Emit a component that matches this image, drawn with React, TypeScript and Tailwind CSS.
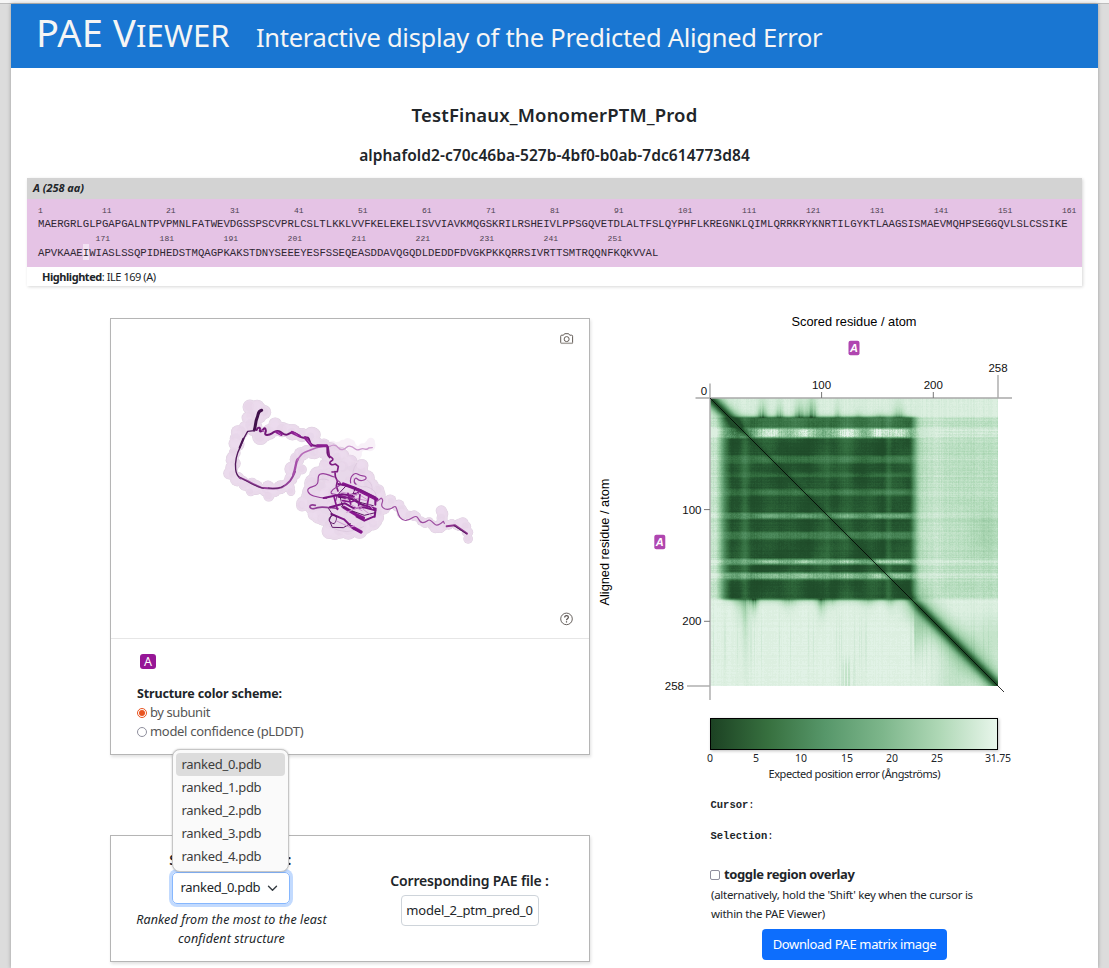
import React from "react";

const ROW_ONE =
  "MAERGRLGLPGAPGALNTPVPMNLFATWEVDGSSPSCVPRLCSLTLKKLVVFKELEKELISVVIAVKMQGSKRILRSHEIVLPPSGQVETDLALTFSLQYPHFLKREGNKLQIMLQRRKRYKNRTILGYKTLAAGSISMAEVMQHPSEGGQVLSLCSSIKE";
const ROW_TWO =
  "APVKAAEIWIASLSSQPIDHEDSTMQAGPKAKSTDNYSEEEYESFSSEQEASDDAVQGQDLDEDDFDVGKPKKQRRSIVRTTSMTRQQNFKQKVVAL";
const HIGHLIGHT = 7;

function makeRandom(seed: number) {
  let s = seed;
  return () => {
    s = (s * 1664525 + 1013904223) % 4294967296;
    return s / 4294967296;
  };
}

const SIZE = 288;
const LEVELS = 48;
const RAMP: [number, number, number, number][] = [
  [0, 28, 66, 36],
  [0.1, 33, 80, 44],
  [0.2, 50, 108, 62],
  [0.4, 86, 148, 102],
  [0.6, 126, 183, 139],
  [0.8, 176, 217, 184],
  [1, 231, 245, 235],
];

function ramp(v: number) {
  for (let i = 1; i < RAMP.length; i++) {
    const a = RAMP[i - 1];
    const b = RAMP[i];
    if (v <= b[0]) {
      const t = (v - a[0]) / (b[0] - a[0]);
      const c = [1, 2, 3].map((k) => Math.round(a[k] + (b[k] - a[k]) * t));
      return `rgb(${c[0]},${c[1]},${c[2]})`;
    }
  }
  return "rgb(231,245,235)";
}

function smooth(a: number, b: number, x: number) {
  const t = Math.min(1, Math.max(0, (x - a) / (b - a)));
  return t * t * (3 - 2 * t);
}

const bump = (x: number, c: number, w: number) => Math.exp(-(((x - c) / w) ** 2));

function buildMatrix() {
  const random = makeRandom(11);
  const rows = Array.from({ length: SIZE }, () => random() - 0.5);
  const cols = Array.from({ length: SIZE }, () => random() - 0.5);
  // [start, end, strength, patchiness]
  const bands = [
    [18, 31, 0.13, 0.2],
    [29.5, 40.5, 0.8, 0.62],
    [57, 66, 0.16, 0.45],
    [74, 80, 0.1, 0.4],
    [90.5, 98, 0.17, 0.45],
    [114.5, 121.5, 0.42, 0.55],
    [133, 142, 0.21, 0.35],
    [160.5, 167, 0.62, 0.55],
    [174, 182, 0.55, 0.35],
  ];
  const paths: string[] = Array.from({ length: LEVELS + 1 }, () => "");
  for (let y = 0; y < SIZE; y++) {
    let start = 0;
    let last = -1;
    let band = 0;
    let patchy = 0;
    for (const [a, b, s, p] of bands) {
      const m = smooth(a - 1, a + 3, y + 0.5) * (1 - smooth(b - 3, b + 1, y + 0.5));
      band += m * s;
      patchy = Math.max(patchy, m * p);
    }
    for (let x = 0; x <= SIZE; x++) {
      let level = -1;
      if (x < SIZE) {
        const n = random() - 0.5;
        const patches =
          bump(x, 60, 15) + bump(x, 95, 13) + bump(x, 137, 17) + bump(x, 168, 8) + bump(x, 188, 13);
        const patch = 1 - patchy + patchy * Math.min(1.1, patches);
        const wave =
          0.03 * Math.sin(x / 9 + Math.sin(y / 23) * 2) * Math.sin(y / 14 - x / 31) +
          0.025 * Math.sin((x + y) / 13) +
          0.02 * Math.sin(x / 4.1);
        let inner =
          0.115 +
          wave * 0.8 +
          band * patch * (1 + cols[x] * 0.2) +
          0.085 * bump(x, 35, 4) +
          0.1 * bump(x, 178, 3) +
          0.045 * bump(x, 117, 4) +
          0.04 * bump(x, 135, 9) +
          rows[y] * 0.035 +
          cols[x] * 0.02 +
          n * (0.02 + band * 0.13);
        inner = Math.max(0.07, inner);
        const side =
          x < 100
            ? 0.88 - 0.2 * smooth(2, 16, x) + band * 0.16
            : 0.83 + 0.05 * smooth(240, 205, x) + band * 0.1 - 0.08 * bump(x, 275, 14) * bump(y, 135, 26);
        const sideValue = Math.min(
          0.96,
          side + rows[y] * 0.06 + cols[x] * 0.045 + n * 0.045 + (x > 210 ? 0.04 * bump(x, 222, 12) : 0)
        );
        const inX = smooth(5, 22, x) * (1 - 0.86 * smooth(198, 210, x) - 0.14 * smooth(205, 232, x));
        const middle = inner * inX + sideValue * (1 - inX);
        let top = 0.945 + cols[x] * 0.03 + rows[y] * 0.015 + n * 0.015;
        const up = Math.max(0, 19 - y);
        for (const [c, w, l, s] of [
          [52, 5, 9, 0.5],
          [69, 4, 8, 0.4],
          [89, 5, 9, 0.5],
          [101, 5, 12, 0.62],
          [127, 3, 8, 0.28],
          [148, 4, 4, 0.2],
          [188, 6, 8, 0.32],
          [170, 6, 3, 0.2],
        ]) {
          top -= s * bump(x, c, w) * Math.exp(-up / l) * (1 + cols[x] * 0.6);
        }
        if (x > 16) top -= 0.4 * Math.exp(-up / 1.8) * (1 - smooth(192, 212, x));
        let bottom = 0.965 + cols[x] * 0.022 + rows[y] * 0.018 + n * 0.012;
        const down = Math.max(0, y - 201);
        for (const [c, w, l, s] of [
          [35, 3.5, 34, 0.24],
          [43, 4.5, 7, 0.6],
          [29, 5, 10, 0.25],
          [111, 5, 8, 0.45],
          [122, 5, 5, 0.2],
          [78, 8, 6, 0.22],
          [157, 8, 5, 0.22],
          [180, 5, 6, 0.22],
        ]) {
          bottom -= s * bump(x, c, w) * Math.exp(-down / l) * (1 + cols[x] * 0.5);
        }
        bottom -= 0.35 * Math.exp(-down / 1.8) * smooth(8, 22, x) * (1 - smooth(198, 210, x));
        if (cols[x] < -0.1) bottom -= 0.1 * bump(x, 137, 6) * smooth(250, 275, y);
        if (cols[x] < -0.38) bottom -= 0.035 * bump(y, 245, 24);
        if (x > 203) {
          bottom -= 0.15 * bump(x, 207, 9) * bump(y, 232, 22);
          bottom -= 0.1 * bump(x, 244, 17) * smooth(225, 278, y);
          bottom -= 0.1 * smooth(225, 288, x) * bump(y, 240, 25);
        }
        const tMid = smooth(17.2, 20.5, y);
        const bMid = smooth(199, 202.5, y);
        let v = top * (1 - tMid) + middle * tMid;
        v = v * (1 - bMid) + bottom * bMid;
        const d = Math.abs(x - y);
        const t = (x + y) / 2;
        const tail = smooth(188, 212, t);
        const head = 1 - smooth(24, 44, t);
        const width = 4 + head * 2.5 + tail * 3.2;
        v *= 1 - (0.35 + 0.54 * Math.max(head, tail)) * Math.exp(-((d / width) ** 2));
        v *= 1 - 0.3 * tail * Math.exp(-((d / 19) ** 2)) - 0.4 * head * Math.exp(-((d / 12) ** 2));
        level = Math.round(Math.min(1, Math.max(0.07, v)) * LEVELS);
      }
      if (level !== last) {
        if (last >= 0) paths[last] += `M${start} ${y}h${x - start}v1h${start - x}z`;
        start = x;
        last = level;
      }
    }
  }
  return paths;
}

const MATRIX = buildMatrix();

function Matrix() {
  return (
    <g transform="translate(110 90)" shapeRendering="crispEdges">
      {MATRIX.map((d, i) => (d ? <path key={i} d={d} fill={ramp(i / LEVELS)} /> : null))}
    </g>
  );
}

function ChainTag({ x, y }: { x: number; y: number }) {
  return (
    <g>
      <rect x={x} y={y} width="11" height="14.5" rx="2" fill="#b046b0" />
      <text x={x + 5.5} y={y + 11.3} textAnchor="middle" fontSize="11" fontWeight="700" fontStyle="italic" fill="#fff">
        A
      </text>
    </g>
  );
}

function PaePlot() {
  return (
    <svg width="430" height="400" viewBox="-10 0 430 400" className="block font-['Liberation_Sans',sans-serif]">
      <text x="254" y="18" textAnchor="middle" fontSize="12.8" textLength="125">
        Scored residue / atom
      </text>
      <text transform="translate(9.2 234) rotate(-90)" textAnchor="middle" fontSize="12.8" textLength="127">
        Aligned residue / atom
      </text>
      <ChainTag x={248.5} y={32.7} />
      <ChainTag x={54.3} y={226.7} />
      <Matrix />
      <g stroke="#a9a9a9" strokeWidth="1.4">
        <path d="M95.5 90H412" />
        <path d="M110 75.500V392" />
        <path d="M398 67V90" />
        <path d="M87 378H110" />
      </g>
      <g stroke="#777" strokeWidth="1">
        <path d="M221.600 84V90M333.300 84V90M104 201.600H110M104 313.300H110" />
      </g>
      <path d="M110 90L404 384" stroke="#000" strokeWidth="0.8" />
      <g fontSize="11.5" fill="#111">
        <text x="104" y="87" textAnchor="middle">0</text>
        <text x="221.5" y="81" textAnchor="middle">100</text>
        <text x="333.300" y="81" textAnchor="middle">200</text>
        <text x="398" y="64" textAnchor="middle">258</text>
        <text x="101.500" y="206" textAnchor="end">100</text>
        <text x="101.500" y="317.200" textAnchor="end">200</text>
        <text x="84" y="382" textAnchor="end">258</text>
      </g>
    </svg>
  );
}

type Point = [number, number];

function blobs(points: Point[], seed: number, spread: number, radius: number) {
  const random = makeRandom(seed);
  const out: [number, number, number][] = [];
  for (let i = 1; i < points.length; i++) {
    const [ax, ay] = points[i - 1];
    const [bx, by] = points[i];
    const steps = Math.max(1, Math.round(Math.hypot(bx - ax, by - ay) / 12));
    for (let k = 0; k < steps; k++) {
      const t = k / steps;
      out.push([
        ax + (bx - ax) * t + (random() - 0.5) * spread,
        ay + (by - ay) * t + (random() - 0.5) * spread,
        radius * (0.75 + random() * 0.4),
      ]);
    }
  }
  return out;
}

const SURFACE = [
  ...blobs([[154, 80], [180, 86], [188, 102], [148, 115], [158, 135], [122, 158], [108, 200], [100, 240], [94, 275], [110, 300], [150, 318], [200, 328], [250, 320], [280, 285], [285, 235], [325, 215], [380, 205]], 3, 16, 19),
  ...blobs([[160, 145], [200, 168], [235, 138], [270, 155], [325, 160], [355, 190], [400, 222], [440, 240]], 9, 22, 21),
  ...blobs([[150, 325], [155, 347]], 21, 4, 14),
  ...blobs([[205, 320], [205, 347], [220, 348]], 22, 4, 15),
  ...blobs([[262, 310], [280, 346]], 23, 4, 14),
  ...blobs([[285, 260], [315, 272]], 24, 4, 13),
  ...blobs([[390, 240], [340, 300], [325, 340], [308, 375], [350, 400], [385, 430], [400, 462], [450, 455], [490, 450], [530, 425], [548, 375], [530, 335], [500, 300], [490, 260], [440, 250], [380, 300], [400, 350], [440, 420], [480, 380], [440, 320], [500, 340], [460, 300], [380, 380], [360, 330], [510, 400], [420, 380]], 5, 16, 21),
  ...blobs([[555, 365], [597, 375], [610, 405], [650, 415], [710, 438], [745, 435], [790, 430], [800, 460], [798, 488]], 7, 12, 16),
  ...blobs([[725, 392], [728, 415], [715, 450]], 4, 4, 16),
];

const FAINT = blobs([[400, 200], [455, 188], [462, 225], [510, 190], [518, 208]], 8, 10, 15);

function Molecule() {
  return (
    <svg width="478" height="319" viewBox="0 0 478 319" className="block">
      <g transform="translate(89 61) scale(0.33333)" fill="none" strokeLinecap="round" strokeLinejoin="round">
        <g opacity="0.4" fill="#eedcf0">
          {FAINT.map(([x, y, r], i) => (
            <circle key={i} cx={x} cy={y} r={r} />
          ))}
        </g>
        <g opacity="0.76">
          {SURFACE.map(([x, y, r], i) => (
            <circle key={i} cx={x} cy={y} r={r + 1.2} fill="#d3bfd5" />
          ))}
          {SURFACE.map(([x, y, r], i) => (
            <circle key={i} cx={x} cy={y} r={r} fill="#e4cfe6" />
          ))}
          <path d="M395 250L350 300L330 370L400 440L480 440L535 400L530 350L490 290L430 240Z" fill="#e2cce4" stroke="#e2cce4" strokeWidth="20" />
          {SURFACE.map(([x, y, r], i) => (
            <circle key={i} cx={x - 2} cy={y - 2} r={r * 0.7} fill={i % 3 ? "#e8d3ea" : "#dbc4de"} opacity="0.4" />
          ))}
          <path d="M470 250Q452 275 462 300T500 320Q535 330 528 360M345 310Q360 290 385 300M390 440Q440 470 490 440M500 300Q520 310 516 330" stroke="#cdb3d0" strokeWidth="3" opacity="0.7" />
        </g>
        <path d="M388 200C400 192 410 196 416 204S432 210 440 202S458 200 466 207S480 206 488 206S500 212 506 204L517 203" stroke="#cb98cd" strokeWidth="4" />
        <path d="M185 91C172 94 176 104 171 114S167 140 163 150" stroke="#40104a" strokeWidth="9" />
        <path d="M163 152L143 154C134 168 127 184 121 200C108 226 105 250 107 268C108 282 113 289 122 296" stroke="#541a5e" strokeWidth="4" />
        <path d="M130 176C126 186 123 193 119 203" stroke="#4a1454" strokeWidth="6" />
        <path d="M119 293C145 302 165 317 184 323C208 326 231 327 245 322C268 310 276 298 285 275" stroke="#94419a" strokeWidth="6" />
        <path d="M119 291C140 304 165 319 190 325M205 324C225 328 240 325 250 318" stroke="#55205e" strokeWidth="2.500" />
        <path d="M280 283C290 258 286 244 294 237" stroke="#a54fa9" strokeWidth="7" />
        <path d="M292 240C304 223 306 220 316 216S345 202 374 198" stroke="#b66bb8" strokeWidth="5" />
        <path d="M170 150C174 137 183 145 180 150S185 157 190 148S200 150 196 159S208 165 216 160S226 151 237 154S252 168 263 163S275 154 286 160S301 175 312 173S326 171 329 184S340 199 352 197L381 198C385 208 377 222 389 232" stroke="#701676" strokeWidth="6" />
        <path d="M230 156L244 163M276 157L298 168M315 173L334 196M352 197H380" stroke="#8c1f92" strokeWidth="9" />
        <path d="M182 148L193 156M234 157L242 164M284 160L292 166M322 180L332 193" stroke="#ab4eb1" strokeWidth="3" />
        <path d="M384 200L388 228C401 236 402 239 393 244S394 258 406 252L415 259L412 275L396 276M405 275L406 290L412 303L409 319L414 333" stroke="#7e1d82" strokeWidth="5" />
        <path d="M403 291C386 287 374 275 360 283S366 313 338 320S328 344 341 348S365 354 380 355M452 309C448 290 463 275 474 283S494 284 498 292S480 306 472 297S458 307 468 313M410 300C430 310 421 316 407 323S388 342 400 342S412 350 407 362" stroke="#963d9b" strokeWidth="3.500" />
        <path d="M346 376C324 370 326 388 341 386C365 376 378 384 392 383S408 387 414 386" stroke="#8f3d95" strokeWidth="5" />
        <path d="M371 354L426 343L450 346L474 339M390 382L435 370L462 385L492 382L526 391" stroke="#781580" strokeWidth="6" />
        <path d="M430 312L462 324L503 344L530 358M432 382L468 404L490 414M455 440L483 456" stroke="#8a1791" strokeWidth="10" />
        <path d="M415 312L445 318L481 330L526 352L526 374M415 350L455 356L480 372L527 386L524 410M394 402L432 418L460 446L483 456M470 410L493 422L521 410" stroke="#7c1684" strokeWidth="6" />
        <path d="M417 350L453 358L487 369L520 377M424 380L465 396L493 406L526 398M386 386L396 401L388 421L397 442L430 443L451 431M402 431C385 430 382 412 397 407S413 421 403 430M436 320L417 340L428 378M466 324L456 350L488 375" stroke="#5e1767" strokeWidth="3" />
        <path d="M420 366L450 351L500 362M440 397L480 380L514 407M460 333L500 358M410 423L450 442L463 438M424 336L470 346M450 372L486 392M500 366L518 386" stroke="#cf96d1" strokeWidth="3" />
        <path d="M416 346L440 352L462 350M428 362L452 366L470 360M402 350L412 388M444 340L452 372M480 344L476 376M506 352L500 384" stroke="#84198b" strokeWidth="5" />
        <path d="M529 365C544 357 542 350 547 358S539 373 548 382S570 389 581 381S589 398 600 412S623 423 640 412S654 430 669 428S684 413 696 425S709 438 721 431S728 420 733 430" stroke="#9b4a9f" strokeWidth="3.500" />
        <path d="M740 439L765 436L801 461" stroke="#8f338f" strokeWidth="6" />
        <path d="M762 437L799 461" stroke="#521b5c" strokeWidth="3" />
      </g>
      <g transform="translate(449 14)" fill="none" stroke="#625b56" strokeWidth="1">
        <path d="M.7 3.200Q.7 2.200 1.700 2.200H3.500L4.600.7H8.600L9.700 2.200H11.600Q12.600 2.200 12.600 3.200V9.500Q12.600 10.500 11.600 10.500H1.700Q.7 10.500 .7 9.500Z" />
        <circle cx="6.650" cy="6.100" r="2.500" />
        <path d="M1 10.300H12.500" stroke="#a8a4a0" strokeWidth="1.500" />
      </g>
      <g transform="translate(455.500 299.900)" fill="none" stroke="#57504d" strokeWidth="0.9">
        <circle r="5.800" />
        <path d="M-1.800-1.500C-1.800-4 1.900-3.800 1.900-1.600C1.900-.2 0-.2 0 1.400M0 2.400V3.600" strokeWidth="1.200" />
      </g>
    </svg>
  );
}

function IndexRow({ first, count }: { first: number; count: number }) {
  return (
    <div className="flex h-[10px] text-[8px] leading-[10px] text-[#4c4150]">
      {Array.from({ length: count }, (_, i) => (
        <span key={i} className="w-16 shrink-0">
          {first + i * 10}
        </span>
      ))}
    </div>
  );
}

function SequencePanel() {
  return (
    <section className="mx-4 mt-[12px] h-[108px] shadow-[1px_1px_3px_rgba(0,0,0,0.16)]">
      <div className="h-[21px] bg-[#d3d3d3] pl-[6px] text-[11px] font-bold italic leading-[20px] tracking-[-0.03px]">A (258 aa)</div>
      <div className="h-[68px] overflow-hidden bg-[#e5c3e5] pl-[11px] pt-[7px] font-['Liberation_Mono',monospace]">
        <IndexRow first={1} count={17} />
        <div className="h-[18px] text-[10.664px] leading-[16px] text-[#2f2733]">{ROW_ONE}</div>
        <div className="pl-[57.600px]">
          <IndexRow first={171} count={9} />
        </div>
        <div className="h-4 text-[10.664px] leading-[18px] text-[#2f2733]">
          {ROW_TWO.slice(0, HIGHLIGHT)}
          <span className="inline-block h-4 bg-[#f3e3f3] align-top leading-[18px]">{ROW_TWO[HIGHLIGHT]}</span>
          {ROW_TWO.slice(HIGHLIGHT + 1)}
        </div>
      </div>
      <div className="pl-[15px] text-[11px] leading-[19px] tracking-[-0.45px]">
        <b>Highlighted</b>: ILE 169 (A)
      </div>
    </section>
  );
}

function StructureCard() {
  return (
    <section className="h-[437px] w-[480px] border border-[#b5b5b5] shadow-[1px_2px_3px_rgba(0,0,0,0.12)]">
      <div className="h-[320px] border-b border-[#e6e6e6]">
        <Molecule />
      </div>
      <div className="pl-[26px] pt-[15px]">
        <div className="ml-[3px] h-[15px] w-4 rounded-[3px] bg-[#961696] text-center text-[12.5px] leading-[15px] text-white">A</div>
        <div className="mt-[15px] text-[12.5px] font-bold leading-[19px] tracking-[-0.14px]">Structure color scheme:</div>
        <div className="flex h-[19px] items-center gap-[3px] text-[13px] tracking-[-0.42px] text-[#555]">
          <span className="flex size-[10px] items-center justify-center rounded-full border border-[#e95420]">
            <span className="size-[6px] rounded-full bg-[#e95420]" />
          </span>
          by subunit
        </div>
        <div className="flex h-[19px] items-center gap-[3px] text-[13px] tracking-[-0.31px] text-[#555]">
          <span className="size-[10px] rounded-full border border-[#8f8f9d]" />
          model confidence (pLDDT)
        </div>
      </div>
    </section>
  );
}

const MODELS = ["ranked_0.pdb", "ranked_1.pdb", "ranked_2.pdb", "ranked_3.pdb", "ranked_4.pdb"];

function FileCard() {
  return (
    <section className="mt-20 grid h-[127px] w-[480px] grid-cols-2 border border-[#b5b5b5] shadow-[1px_2px_3px_rgba(0,0,0,0.12)]">
      <div className="flex flex-col items-center pt-[12px]">
        <div className="h-6 text-[14px] font-semibold leading-6 tracking-[0.4px]">Select structure :</div>
        <div className="relative flex h-[32px] w-[118px] items-center justify-between rounded-[5px] border border-[#86b7fe] pl-2 pr-[11px] text-[13px] tracking-[-0.3px] shadow-[0_0_0_3px_#c2dafe]">
          ranked_0.pdb
          <svg width="11" height="7" viewBox="0 0 11 7" fill="none" stroke="#343a40" strokeWidth="1.400" strokeLinecap="round" strokeLinejoin="round">
            <path d="M1.500 1.200L5.500 5.200L9.500 1.200" />
          </svg>
          <div className="absolute -left-px bottom-[31px] h-[123px] w-[117px] rounded-lg border border-[#c6c6c6] bg-[#fafafa] px-[3px] pt-[3px] text-[#3d3d3d] shadow-[0_0_2px_rgba(0,0,0,0.25)]">
            {MODELS.map((name, i) => (
              <div key={name} className={i === 0 ? "h-[23px] rounded-[4px] bg-[#dcdcdc] pl-[6px] leading-[23px]" : "h-[23px] pl-[6px] leading-[23px]"}>
                {name}
              </div>
            ))}
          </div>
        </div>
        <p className="ml-0.5 mt-[6px] w-[210px] text-center text-[12.500px] italic leading-[19px] tracking-[0.1px]">
          Ranked from the most to the least
          <br />
          confident structure
        </p>
      </div>
      <div className="flex flex-col items-center pt-[35px]">
        <div className="h-6 text-[14px] font-semibold leading-5 tracking-[-0.17px]">Corresponding PAE file :</div>
        <div className="h-[31px] w-[138px] rounded-[4px] border border-[#ced4da] text-center text-[13px] leading-[29px] tracking-[-0.2px]">
          model_2_ptm_pred_0
        </div>
      </div>
    </section>
  );
}

const TICKS: [string, number][] = [["0", 20], ["5", 66], ["10", 111], ["15", 157], ["20", 202], ["25", 247], ["31.75", 308]];

function PaeColumn() {
  return (
    <section className="-mt-[10px] w-[430px]">
      <PaePlot />
      <div className="ml-[120px] mt-[10px] w-[288px]">
        <div className="h-8 border border-black bg-[linear-gradient(to_right,#1c4223_0%,#37703f_20%,#57976a_40%,#7db68b_60%,#afd8b6_80%,#e8f6eb_100%)] shadow-[1px_1px_3px_rgba(0,0,0,0.25)]" />
        <svg width="330" height="34" viewBox="0 0 330 34" className="-ml-5 block text-[10.5px]" fill="#212529">
          {TICKS.map(([label, x]) => (
            <text key={label} x={x} y="12" textAnchor="middle" textLength={label.length > 2 ? 26 : undefined}>
              {label}
            </text>
          ))}
          <text x="164.500" y="28" textAnchor="middle" fontSize="11" textLength="172">
            Expected position error (Ångströms)
          </text>
        </svg>
        <div className="ml-[0.500px] mt-[13px] font-['Liberation_Mono',monospace] text-[10.500px] leading-[16px]">
          <b>Cursor</b>:
        </div>
        <div className="ml-[0.500px] mt-[15px] font-['Liberation_Mono',monospace] text-[10.500px] leading-[16px]">
          <b>Selection</b>:
        </div>
        <div className="mt-[21px] flex h-5 items-center gap-[4px] text-[13px] font-bold tracking-[-0.38px]">
          <span className="size-[10px] rounded-[2px] border border-[#8f8f9d]" />
          toggle region overlay
        </div>
        <p className="ml-px w-[288px] whitespace-nowrap text-[11.500px] leading-[19px] tracking-[-0.28px]">
          (alternatively, hold the 'Shift' key when the cursor is
          <br />
          within the PAE Viewer)
        </p>
        <button className="ml-[52px] mt-[6px] block h-[31px] w-[185px] whitespace-nowrap rounded-[4px] bg-[#0d6efd] text-[13px] tracking-[-0.36px] text-white">
          Download PAE matrix image
        </button>
      </div>
    </section>
  );
}

export default function App() {
  return (
    <div className="h-[968px] overflow-hidden bg-[#dcdcdc] font-['Noto_Sans',sans-serif] text-[#212529]">
      <div className="h-1 border-b border-[#bdbdbd] bg-[#f6f6f6]" />
      <div className="ml-[11px] h-[964px] w-[1087px] bg-white shadow-[0_0_4px_rgba(0,0,0,0.3)]">
        <header className="flex h-16 items-baseline whitespace-nowrap bg-[#1976d2] pl-[25px] text-[#f5f5f5]">
          <h1 className="w-[220px] text-[38px] font-normal leading-[57px] tracking-[0.15px]">
            PAE V<span className="text-[31px]">IEWER</span>
          </h1>
          <span className="text-[25.500px] tracking-[-0.28px]">Interactive display of the Predicted Aligned Error</span>
        </header>
        <h2 className="mt-[34px] text-center text-[18.500px] font-semibold leading-[26px] tracking-[0.15px]">TestFinaux_MonomerPTM_Prod</h2>
        <h3 className="mt-[16px] text-center text-[15.500px] font-semibold leading-[22px] tracking-[0.04px]">
          alphafold2-c70c46ba-527b-4bf0-b0ab-7dc614773d84
        </h3>
        <SequencePanel />
        <main className="flex pl-[99px] pt-[32px]">
          <div>
            <StructureCard />
            <FileCard />
          </div>
          <PaeColumn />
        </main>
      </div>
    </div>
  );
}
